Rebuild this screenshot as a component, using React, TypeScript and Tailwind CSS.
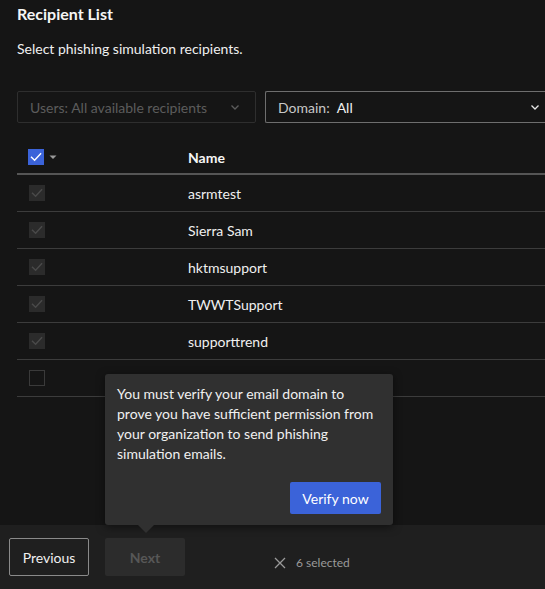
import React from "react";

const font = { fontFamily: 'Lato, "Noto Sans", sans-serif' };

const names = ["asrmtest", "Sierra Sam", "hktmsupport", "TWWTSupport", "supporttrend", "AAAFest"];

function Check({ color }: { color: string }) {
  return (
    <svg width="16" height="16" viewBox="0 0 16 16" fill="none">
      <path d="M3.5 8.3 L6.6 11.3 L12.6 4.8" stroke={color} strokeWidth="1.4" strokeLinecap="square" />
    </svg>
  );
}

function Chevron({ color }: { color: string }) {
  return (
    <svg width="12" height="12" viewBox="0 0 12 12" fill="none">
      <path d="M2.5 4.5 L6 8 L9.5 4.5" stroke={color} strokeWidth="1.3" />
    </svg>
  );
}

export default function App() {
  return (
    <div className="relative w-[545px] h-[589px] overflow-hidden bg-[#151515] text-white flex flex-col" style={font}>
      <div className="flex-1 pl-[17px] overflow-hidden">
        <div className="text-[16px] font-bold leading-[22px] pt-[3px] text-[#f5f5f5]">Recipient List</div>
        <div className="text-[14px] leading-[20px] mt-[14px] text-[#f0f0f0]">Select phishing simulation recipients.</div>
        <div className="flex gap-[9px] mt-[32px] h-[32px]">
          <div className="w-[239px] shrink-0 border border-[#2e2e2e] rounded-[2px] flex items-center justify-between pl-[12px] pr-[14px] text-[14px] text-[#5c5c5c]">
            <span>Users: All available recipients</span>
            <Chevron color="#5c5c5c" />
          </div>
          <div className="flex-1 min-w-0 border border-[#6e6e6e] border-r-0 rounded-l-[2px] flex items-center justify-between pl-[12px] pr-[4px] text-[14px]">
            <span className="whitespace-nowrap">
              <span className="text-[#c8c8c8]">Domain:</span>
              <span className="text-[#f0f0f0] ml-[7px]">All</span>
            </span>
            <Chevron color="#e8e8e8" />
          </div>
        </div>
        <div className="mt-[17px]">
          <div className="h-[35px] flex items-center border-b-2 border-[#555555] pt-[1px]">
            <div className="w-[171px] pl-[11px] flex items-center gap-[4px]">
              <div className="w-[16px] h-[16px] bg-[#3b63d9] flex items-center justify-center">
                <Check color="#ffffff" />
              </div>
              <svg width="10" height="10" viewBox="0 0 10 10">
                <path d="M1.5 3.5 L8.5 3.5 L5 7 Z" fill="#9a9a9a" />
              </svg>
            </div>
            <div className="text-[14px] font-bold text-[#f5f5f5]">Name</div>
          </div>
          {names.map((n, i) => (
            <div key={n} className="h-[37px] flex items-center border-b border-[#3c3c3c]">
              <div className="w-[171px] pl-[12px] flex items-center">
                {i < 5 ? (
                  <div className="w-[16px] h-[16px] bg-[#2b2b2b] flex items-center justify-center">
                    <Check color="#4a4a4a" />
                  </div>
                ) : (
                  <div className="w-[16px] h-[16px] border border-[#3a3a3a]" />
                )}
              </div>
              <div className="text-[14px] text-[#f0f0f0]">{n}</div>
            </div>
          ))}
        </div>
      </div>
      <div className="h-[64px] shrink-0 bg-[#1f1f1f] flex items-start pt-[13px] pl-[9px]">
        <button className="w-[80px] h-[38px] border border-[#8a8a8a] rounded-[2px] text-[14px] text-[#f0f0f0]">Previous</button>
        <button className="w-[80px] h-[38px] ml-[16px] bg-[#2c2c2c] rounded-[2px] text-[14px] font-bold text-[#575757]">Next</button>
        <div className="ml-[88px] mt-[16px] flex items-center text-[12px] text-[#9a9a9a]">
          <svg width="14" height="14" viewBox="0 0 14 14" className="mr-[9px]">
            <path d="M2 2 L12 12 M12 2 L2 12" stroke="#9a9a9a" strokeWidth="1.3" />
          </svg>
          <span>6 selected</span>
        </div>
      </div>

      <div className="absolute left-[105px] top-[374px] w-[288px] h-[151px] bg-[#303030] rounded-[3px] shadow-[0_2px_8px_rgba(0,0,0,0.5)] px-[12px] pt-[10px]">
        <p className="text-[14px] leading-[20px] text-[#f0f0f0]">
          You must verify your email domain to prove you have sufficient permission from your organization to send phishing simulation emails.
        </p>
        <div className="flex justify-end mt-[18px] pr-0">
          <button className="w-[91px] h-[32px] bg-[#3b63d9] rounded-[2px] text-[14px] text-white">Verify now</button>
        </div>
        <div className="absolute left-[33px] bottom-[-8px] w-0 h-0 border-l-[8px] border-r-[8px] border-t-[8px] border-l-transparent border-r-transparent border-t-[#303030]" />
      </div>
    </div>
  );
}
